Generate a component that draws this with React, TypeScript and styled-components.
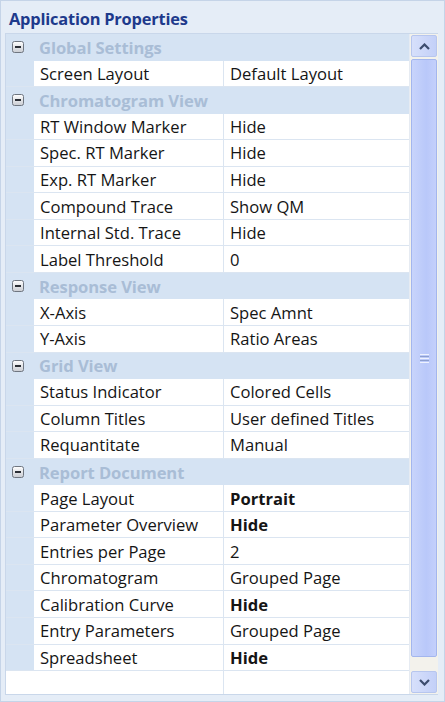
import React from "react";
import styled, { createGlobalStyle } from "styled-components";

const Global = createGlobalStyle`
  html, body { margin: 0; padding: 0; background: #ffffff; }
  body { font-family: "Open Sans", "Noto Sans", sans-serif; }
`;

const Window = styled.div`
  width: 445px;
  height: 702px;
  box-sizing: border-box;
  background: #e5edf7;
  border: 1px solid #c5d4e8;
  display: flex;
  flex-direction: column;
  padding: 0 6px 6px 4px;
`;

const Title = styled.div`
  height: 32px;
  display: flex;
  align-items: center;
  padding: 3px 0 0 4px;
  box-sizing: border-box;
  font-size: 16.4px;
  font-weight: 700;
  color: #1e3a8c;
  letter-spacing: -0.2px;
`;

const Body = styled.div`
  flex: 1;
  display: flex;
  min-height: 0;
  border: 1px solid #c9d7ea;
  border-right: none;
`;

const Table = styled.div`
  flex: 1;
  display: flex;
  flex-direction: column;
  background: #ffffff;
`;

const Row = styled.div`
  height: 26.56px;
  box-sizing: border-box;
  display: flex;
  border-bottom: 1px solid #dbe5f1;
  font-size: 16.6px;
  color: #151515;
`;

const Gutter = styled.div`
  width: 28px;
  flex: none;
  box-sizing: border-box;
  padding-left: 6px;
  background: #d5e3f3;
  display: flex;
  align-items: center;
`;

const CategoryRow = styled(Row)`
  background: #d5e3f3;
  border-bottom: none;
`;

const CategoryLabel = styled.div`
  display: flex;
  align-items: center;
  padding-left: 5px;
  font-weight: 700;
  color: #a9bdd6;
  letter-spacing: -0.1px;
`;

const Cell = styled.div<{ $bold?: boolean }>`
  display: flex;
  align-items: center;
  padding-left: 6px;
  font-weight: ${(p) => (p.$bold ? 700 : 400)};
  white-space: nowrap;
  overflow: hidden;
`;

const NameCell = styled(Cell)`
  width: 183px;
  flex: none;
  border-right: 1px solid #dbe5f1;
`;

const ValueCell = styled(Cell)`
  flex: 1;
`;

const EmptyRow = styled(Row)`
  border-bottom: none;
  flex: 1;
`;

const EmptyName = styled.div`
  width: 217px;
  flex: none;
  border-right: 1px solid #dbe5f1;
`;

const Scrollbar = styled.div`
  width: 26px;
  flex: none;
  display: flex;
  flex-direction: column;
  background: #f3f2ec;
  padding: 1px 1px;
  gap: 2px;
  border-left: 1px solid #e6ebf2;
`;

const ArrowBtn = styled.div`
  height: 22px;
  flex: none;
  box-sizing: border-box;
  border: 1px solid #b7c6ee;
  border-radius: 2px;
  background: linear-gradient(to right, #d7e0fb, #c3d0f8);
  display: flex;
  align-items: center;
  justify-content: center;
`;

const Thumb = styled.div`
  height: 598px;
  flex: none;
  box-sizing: border-box;
  border: 1px solid #a3b6ee;
  border-radius: 2px;
  background: linear-gradient(to right, #c8d4fb, #b9c8fa 60%, #c4d0fb);
  display: flex;
  align-items: center;
  justify-content: center;
`;

const Track = styled.div`
  flex: 1;
`;

const MinusBox = () => (
  <svg width="12" height="12" viewBox="0 0 12 12">
    <defs>
      <linearGradient id="mb" x1="0" y1="0" x2="0" y2="1">
        <stop offset="0" stopColor="#ffffff" />
        <stop offset="1" stopColor="#c9ccd2" />
      </linearGradient>
    </defs>
    <rect x="0.5" y="0.5" width="11" height="11" rx="2" fill="url(#mb)" stroke="#6f7680" />
    <rect x="3" y="5" width="6" height="2" fill="#2b2f36" />
  </svg>
);

const Chevron = ({ up }: { up?: boolean }) => (
  <svg width="11" height="7" viewBox="0 0 11 7">
    <path
      d={up ? "M1 6 L5.5 1.5 L10 6" : "M1 1 L5.5 5.5 L10 1"}
      fill="none"
      stroke="#3c4c6e"
      strokeWidth="2.2"
    />
  </svg>
);

const Gripper = () => (
  <svg width="9" height="9" viewBox="0 0 9 9">
    {[0, 2, 4, 6, 8].map((y) => (
      <line key={y} x1="0" y1={y + 0.5} x2="9" y2={y + 0.5} stroke={y % 4 === 0 ? "#eef2fe" : "#8d9fcf"} />
    ))}
  </svg>
);

type Prop = { name: string; value: string; bold?: boolean };
type Cat = { title: string; props: Prop[] };

const data: Cat[] = [
  { title: "Global Settings", props: [{ name: "Screen Layout", value: "Default Layout" }] },
  {
    title: "Chromatogram View",
    props: [
      { name: "RT Window Marker", value: "Hide" },
      { name: "Spec. RT Marker", value: "Hide" },
      { name: "Exp. RT Marker", value: "Hide" },
      { name: "Compound Trace", value: "Show QM" },
      { name: "Internal Std. Trace", value: "Hide" },
      { name: "Label Threshold", value: "0" },
    ],
  },
  {
    title: "Response View",
    props: [
      { name: "X-Axis", value: "Spec Amnt" },
      { name: "Y-Axis", value: "Ratio Areas" },
    ],
  },
  {
    title: "Grid View",
    props: [
      { name: "Status Indicator", value: "Colored Cells" },
      { name: "Column Titles", value: "User defined Titles" },
      { name: "Requantitate", value: "Manual" },
    ],
  },
  {
    title: "Report Document",
    props: [
      { name: "Page Layout", value: "Portrait", bold: true },
      { name: "Parameter Overview", value: "Hide", bold: true },
      { name: "Entries per Page", value: "2" },
      { name: "Chromatogram", value: "Grouped Page" },
      { name: "Calibration Curve", value: "Hide", bold: true },
      { name: "Entry Parameters", value: "Grouped Page" },
      { name: "Spreadsheet", value: "Hide", bold: true },
    ],
  },
];

export default function App() {
  return (
    <>
      <Global />
      <Window>
        <Title>Application Properties</Title>
        <Body>
          <Table>
            {data.map((cat) => (
              <React.Fragment key={cat.title}>
                <CategoryRow>
                  <Gutter>
                    <MinusBox />
                  </Gutter>
                  <CategoryLabel>{cat.title}</CategoryLabel>
                </CategoryRow>
                {cat.props.map((p) => (
                  <Row key={p.name}>
                    <Gutter />
                    <NameCell>{p.name}</NameCell>
                    <ValueCell $bold={p.bold}>{p.value}</ValueCell>
                  </Row>
                ))}
              </React.Fragment>
            ))}
            <EmptyRow>
              <EmptyName />
            </EmptyRow>
          </Table>
          <Scrollbar>
            <ArrowBtn>
              <Chevron up />
            </ArrowBtn>
            <Thumb>
              <Gripper />
            </Thumb>
            <Track />
            <ArrowBtn>
              <Chevron />
            </ArrowBtn>
          </Scrollbar>
        </Body>
      </Window>
    </>
  );
}
